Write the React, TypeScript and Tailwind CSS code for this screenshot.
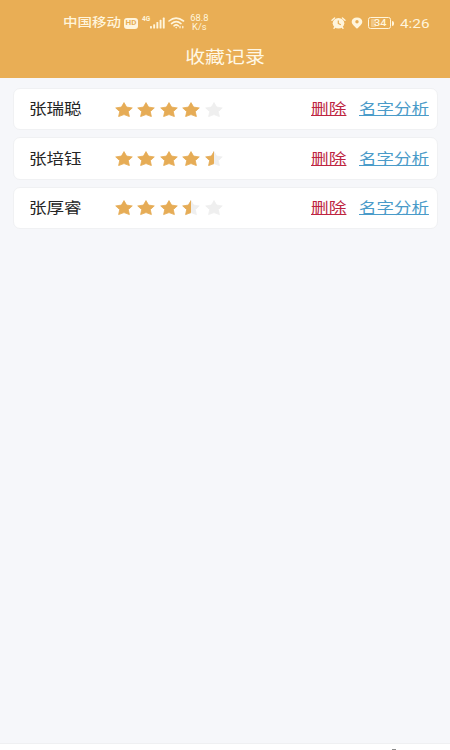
type Favorite = {
  name: string;
  rating: number;
};

const FAVORITES: Favorite[] = [
  { name: "张瑞聪", rating: 4 },
  { name: "张培钰", rating: 4.5 },
  { name: "张厚睿", rating: 3.5 }
];

const STAR_PATH =
  "M9 0.6 L11.6 5.1 L17.3 5.9 L13.3 9.6 L14.4 14.6 L9 12.6 L3.6 14.6 L4.7 9.6 L0.7 5.9 L6.4 5.1 Z";

const Star = ({ fill }: { fill: number }) => (
  <svg viewBox="0 0 18 15.4" className="h-[15.4px] w-[18px]" strokeWidth="0.8" strokeLinejoin="round">
    {fill < 1 ? <path d={STAR_PATH} fill="#efefef" stroke="#efefef" /> : null}
    {fill > 0 ? (
      <path
        d={STAR_PATH}
        fill="#e6ac56"
        stroke="#e6ac56"
        style={{ clipPath: fill < 1 ? "inset(-1px 50% -1px -1px)" : undefined }}
      />
    ) : null}
  </svg>
);

const StarRating = ({ rating }: { rating: number }) => (
  <div className="flex gap-[4.5px]">
    {[0, 1, 2, 3, 4].map((index) => (
      <Star key={index} fill={Math.max(0, Math.min(1, rating - index))} />
    ))}
  </div>
);

const StatusBar = () => (
  <div className="flex h-[42px] items-center pt-1 pl-[63px] text-[#fff5dc]">
    <span className="w-[61px] shrink-0 pt-px whitespace-nowrap text-[12.5px] leading-none font-medium">
      <span className="inline-block origin-left scale-x-[1.16]">中国移动</span>
    </span>
    <span className="flex h-[11px] w-[14px] shrink-0 items-center justify-center rounded-[3px] bg-[#fff5dc] text-[8px] leading-none font-bold text-[#e8ad54]">
      HD
    </span>
    <span className="ml-[4px] w-[8px] shrink-0 self-start pt-[12px] text-[6.5px] leading-none font-bold">4G</span>
    <svg viewBox="0 0 15 12" className="h-[12px] w-[15px] shrink-0" fill="currentColor">
      <rect x="0" y="9" width="1.9" height="2.6" rx="0.6" />
      <rect x="3.2" y="7.2" width="1.9" height="4.4" rx="0.6" />
      <rect x="6.4" y="5" width="1.9" height="6.6" rx="0.6" />
      <rect x="9.6" y="2.8" width="1.9" height="8.8" rx="0.6" />
      <rect x="12.8" y="0.6" width="1.9" height="11" rx="0.6" />
    </svg>
    <svg
      viewBox="0 0 17 12"
      className="ml-[3px] h-[12px] w-[17px] shrink-0"
      fill="none"
      stroke="currentColor"
      strokeWidth="1.6"
      strokeLinecap="round"
    >
      <path d="M1 4 Q8 -1.8 15.5 4" />
      <path d="M3.5 6.6 Q8.2 2.6 13 6.6" />
      <path d="M6 8.8 Q8.2 7 10.4 8.8" />
      <circle cx="8.2" cy="10.6" r="0.8" fill="currentColor" stroke="none" />
      <path d="M12 9.4 V10.8 M14.8 9.4 V10.8" strokeWidth="1.3" />
    </svg>
    <span className="ml-[3px] w-[22px] shrink-0 text-center text-[8.5px] leading-[9.5px]">
      <span className="inline-block scale-x-110">
        68.8
        <br />
        K/s
      </span>
    </span>

    <svg viewBox="0 0 15 12" className="ml-[121px] h-[12px] w-[15px] shrink-0">
      <path
        d="M1 3.2 L3.6 1 M14 3.2 L11.4 1 M3 11.2 L4.3 9.8 M12 11.2 L10.7 9.8"
        stroke="currentColor"
        strokeWidth="1.4"
        strokeLinecap="round"
      />
      <ellipse cx="7.5" cy="6.2" rx="5.8" ry="5.2" fill="currentColor" />
      <path d="M7.3 3.4 V6.5 L9.8 7.8" fill="none" stroke="#e8ad54" strokeWidth="1.2" />
    </svg>
    <svg viewBox="0 0 12 12" className="ml-[5px] h-[12px] w-[12px] shrink-0">
      <path
        d="M6 0.5 C2.8 0.5 0.7 2.2 0.7 4.8 C0.7 7.4 4 9.9 6 11.7 C8 9.9 11.3 7.4 11.3 4.8 C11.3 2.2 9.2 0.5 6 0.5 Z"
        fill="currentColor"
      />
      <circle cx="6" cy="4.7" r="1.7" fill="#e8ad54" />
    </svg>
    <span className="ml-[5px] flex h-[12px] w-[23px] shrink-0 items-center rounded-[2.5px] border border-current pl-[2px]">
      <span className="h-[8px] w-[5px] shrink-0 rounded-[1px] bg-current/35" />
      <span className="-ml-[2px] text-[9.5px] leading-none font-medium">
        <span className="inline-block origin-left scale-x-[1.15]">34</span>
      </span>
    </span>
    <span className="ml-px h-[5px] w-[2px] shrink-0 rounded-r bg-current" />
    <span className="ml-[6px] shrink-0 text-[13px] leading-none">
      <span className="inline-block origin-left scale-x-[1.18]">4:26</span>
    </span>
  </div>
);

const FavoriteRow = ({ name, rating }: Favorite) => (
  <li className="flex h-[42.4px] items-center rounded-[7px] border border-[#f0f1f3] bg-white pl-[15px] text-[15px] leading-none">
    <span className="w-[86px] shrink-0 pt-px whitespace-nowrap text-[#262626]">
      <span className="inline-block origin-left scale-x-[1.17]">{name}</span>
    </span>
    <StarRating rating={rating} />
    <button className="ml-[88px] w-[48px] shrink-0 pt-[1.5px] whitespace-nowrap text-left text-[#bd2440]">
      <span className="inline-block origin-left scale-x-[1.18] underline underline-offset-[1px]">删除</span>
    </button>
    <button className="shrink-0 pt-[1.5px] whitespace-nowrap text-left text-[#4a9bc9]">
      <span className="inline-block origin-left scale-x-[1.165] underline underline-offset-[1px]">名字分析</span>
    </button>
  </li>
);

export default function App() {
  return (
    <div className="flex h-[750px] w-[450px] flex-col overflow-hidden bg-[#f6f7fa] font-['Roboto','Noto_Sans_CJK_SC',sans-serif]">
      <header className="h-[78px] shrink-0 bg-[#e9ae55]">
        <StatusBar />
        <h1 className="pt-[7px] text-center text-[17px] leading-none text-[#fff8e6]">
          <span className="inline-block scale-x-[1.17]">收藏记录</span>
        </h1>
      </header>

      <ul className="flex flex-1 flex-col gap-[7px] px-[12.5px] pt-[10px]">
        {FAVORITES.map((favorite) => (
          <FavoriteRow key={favorite.name} {...favorite} />
        ))}
      </ul>

      <footer className="flex h-[7px] shrink-0 items-end border-t border-[#eff0f2] bg-white pl-[392px]">
        <span className="h-px w-[4px] bg-[#8c8c8c]" />
      </footer>
    </div>
  );
}
